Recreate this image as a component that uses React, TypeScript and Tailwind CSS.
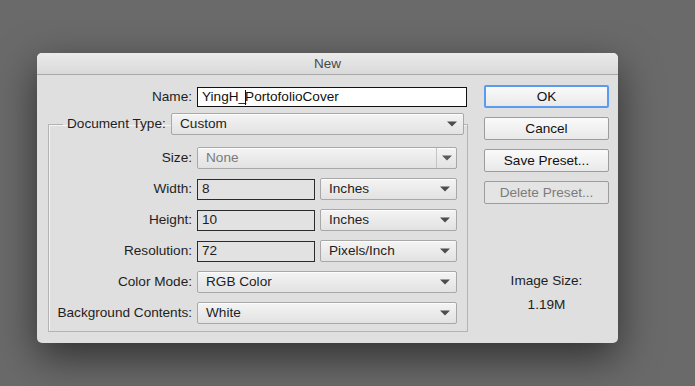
import React from 'react';

function Arrow({ color = '#4d4d4d' }: { color?: string }) {
    return (
        <svg width="10" height="6" viewBox="0 0 10 6" className="shrink-0">
            <path d="M0 0.5 H10 L5 5.5 Z" fill={color} />
        </svg>
    );
}

function Select({ value, width, disabled = false, split = false }: { value: string; width: string; disabled?: boolean; split?: boolean }) {
    return (
        <div
            className={`${width} h-[22px] shrink-0 flex items-center rounded-[2px] border border-[#a8a8a8] bg-gradient-to-b from-[#f4f4f4] to-[#e2e2e2] shadow-[inset_0_1px_0_rgba(255,255,255,0.7)]`}
        >
            <span className={`flex-1 pl-[8px] truncate ${disabled ? 'text-[#7a7a7a]' : 'text-[#1e1e1e]'}`}>{value}</span>
            {split ? (
                <div className="h-full w-[20px] border-l border-[#c4c4c4] flex items-center justify-center">
                    <Arrow color="#5a5a5a" />
                </div>
            ) : (
                <div className="pr-[6px] flex items-center">
                    <Arrow />
                </div>
            )}
        </div>
    );
}

function Field({ value }: { value: string }) {
    return (
        <div className="w-[118px] h-[21px] shrink-0 flex items-center border border-[#2b2b2b] bg-[#e2e2e2] pl-[4px] text-[#1e1e1e]">
            {value}
        </div>
    );
}

function Row({ label, children }: { label: string; children: React.ReactNode }) {
    return (
        <div className="h-[22px] flex items-center gap-[5px]">
            <div className="w-[129px] shrink-0 flex justify-end">
                <span className="text-[#1e1e1e] whitespace-nowrap shrink-0">{label}</span>
            </div>
            {children}
        </div>
    );
}

function cn(...parts: (string | false | undefined)[]) {
    return parts.filter(Boolean).join(' ');
}

function Button({ label, focused = false, disabled = false }: { label: string; focused?: boolean; disabled?: boolean }) {
    return (
        <div
            className={cn(
                'h-[23px] w-[125px] flex items-center justify-center rounded-[2px] bg-gradient-to-b from-[#fafafa] to-[#e9e9e9]',
                focused ? 'border-2 border-[#5b9bef]' : 'border border-[#9c9c9c]',
                disabled ? 'text-[#7c7c7c] bg-none bg-[#e4e4e4]' : 'text-[#111]'
            )}
        >
            {label}
        </div>
    );
}

export default function App() {
    return (
        <div className="w-[695px] h-[386px] bg-[#6a6a6a] overflow-hidden pt-[53px] pl-[37px] font-['Liberation_Sans',Arial,sans-serif] text-[13.6px] leading-none">
            {/* Dialog window */}
            <div className="w-[581px] h-[290px] rounded-[5px] bg-[#dfdfdf] shadow-[0_14px_40px_rgba(0,0,0,0.55)] flex flex-col overflow-hidden">

                {/* Title bar */}
                <div className="h-[22px] shrink-0 flex items-center justify-center border-b border-[#a9a9a9] bg-gradient-to-b from-[#ebebeb] to-[#d9d9d9] text-[13.5px] text-[#4a4a4a]">
                    New
                </div>

                <div className="flex flex-1">
                    {/* Left: form */}
                    <div className="w-[447px] pl-[11px] pt-[12px] flex flex-col">
                        <div className="h-[20px] flex items-center gap-[5px]">
                            <span className="w-[144px] text-right text-[#1e1e1e]">Name:</span>
                            <div className="w-[270px] h-[20px] flex items-center border border-[#111] bg-white pl-[4px] text-[#111]">
                                YingH_<span className="inline-block w-px h-[15px] bg-[#111] -mx-px" />PortofolioCover
                            </div>
                        </div>

                        <fieldset className="mt-[6px] w-[420px] border border-[#b3b3b3] shadow-[inset_1px_1px_0_#f4f4f4] pl-[14px] pt-[12px] pb-[7px] min-w-0">
                            <legend className="p-0 flex items-center">
                                <span className="w-[108px] pl-[4px] text-[#1e1e1e] whitespace-nowrap">Document Type:</span>
                                <Select value="Custom" width="w-[293px]" />
                            </legend>
                            <div className="flex flex-col gap-[9px]">
                                <Row label="Size:">
                                    <Select value="None" width="w-[260px]" disabled split />
                                </Row>
                                <Row label="Width:">
                                    <Field value="8" />
                                    <Select value="Inches" width="w-[137px]" />
                                </Row>
                                <Row label="Height:">
                                    <Field value="10" />
                                    <Select value="Inches" width="w-[137px]" />
                                </Row>
                                <Row label="Resolution:">
                                    <Field value="72" />
                                    <Select value="Pixels/Inch" width="w-[137px]" />
                                </Row>
                                <Row label="Color Mode:">
                                    <Select value="RGB Color" width="w-[260px]" />
                                </Row>
                                <Row label="Background Contents:">
                                    <Select value="White" width="w-[260px]" />
                                </Row>
                            </div>
                        </fieldset>
                    </div>

                    {/* Right: buttons */}
                    <div className="flex-1 pt-[10px] flex flex-col items-start">
                        <div className="flex flex-col gap-[9px]">
                            <Button label="OK" focused />
                            <Button label="Cancel" />
                            <Button label="Save Preset..." />
                            <Button label="Delete Preset..." disabled />
                        </div>
                        <div className="w-[125px] mt-[70px] flex flex-col items-center gap-[10px] text-[#1e1e1e]">
                            <span>Image Size:</span>
                            <span>1.19M</span>
                        </div>
                    </div>
                </div>
            </div>
        </div>
    );
}
